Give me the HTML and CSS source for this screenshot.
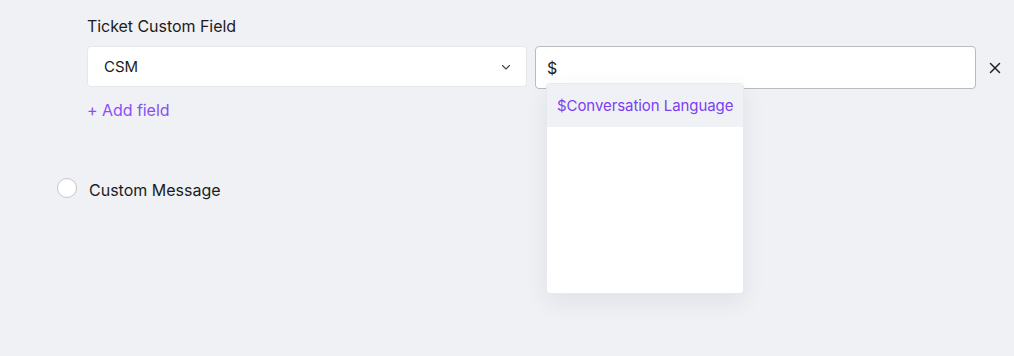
FILE: index.html
```html
<!DOCTYPE html>
<html>
<head>
<meta charset="utf-8">
<link rel="stylesheet" href="styles.css">
</head>
<body>
<div class="page">
  <div class="section">
    <div class="label">Ticket Custom Field</div>
    <div class="row">
      <div class="select">
        <span class="select-value">CSM</span>
        <svg class="chevron" width="12" height="8" viewBox="0 0 12 8"><path d="M2.5 2.5 L6 6 L9.5 2.5" fill="none" stroke="#444" stroke-width="1.1" stroke-linecap="round" stroke-linejoin="round"/></svg>
      </div>
      <div class="input-wrap">
        <div class="input">$</div>
        <div class="dropdown">
          <div class="option active">$Conversation Language</div>
        </div>
      </div>
      <button class="remove">
        <svg width="14" height="14" viewBox="0 0 14 14"><path d="M2.5 2.5 L11.5 11.5 M11.5 2.5 L2.5 11.5" stroke="#222" stroke-width="1.5" stroke-linecap="round"/></svg>
      </button>
    </div>
    <div class="add">+ Add field</div>
  </div>
  <div class="radio-row">
    <span class="radio"></span>
    <span class="radio-label">Custom Message</span>
  </div>
</div>
</body>
</html>
```
FILE: styles.css
```css
* { box-sizing: border-box; }
html, body { margin: 0; padding: 0; }
body {
  background: #f0f1f5;
  font-family: Inter, "Noto Sans", sans-serif;
  color: #1f1f24;
  width: 1014px;
  height: 356px;
  overflow: hidden;
}
.page {
  padding: 14px 0 0 0;
}
.section {
  padding-left: 87px;
}
.label {
  font-size: 16px;
  line-height: 24px;
  letter-spacing: -0.05px;
  color: #1c1c21;
  margin-bottom: 8px;
}
.row {
  display: flex;
  align-items: flex-start;
}
.select {
  width: 440px;
  height: 41px;
  background: #fff;
  border: 1px solid #e6e7ec;
  border-radius: 4px;
  display: flex;
  align-items: center;
  justify-content: space-between;
  padding: 0 14px 0 16px;
  font-size: 15px;
  letter-spacing: 0;
  color: #1c1c21;
}
.chevron { margin-top: 1px; }
.input-wrap {
  position: relative;
  margin-left: 8px;
}
.input {
  width: 441px;
  height: 43px;
  background: #fff;
  border: 1px solid #b9bac2;
  border-radius: 4px;
  padding: 0 11px;
  display: flex;
  align-items: center;
  font-size: 16px;
  color: #1c1c21;
}
.dropdown {
  position: absolute;
  left: 11px;
  top: 37px;
  width: 198px;
  height: 211px;
  background: #fff;
  border: 1px solid #e8e9ee;
  border-radius: 4px;
  box-shadow: 0 8px 24px rgba(30, 30, 50, 0.07);
  overflow: hidden;
}
.option {
  height: 43px;
  display: flex;
  align-items: center;
  padding-left: 10px;
  font-size: 15px;
  letter-spacing: -0.07px;
  color: #7b3ff2;
}
.option.active { background: #f0f1f5; }
.remove {
  border: none;
  background: transparent;
  padding: 0;
  margin-left: 12px;
  height: 43px;
  width: 14px;
  display: flex;
  align-items: center;
  justify-content: center;
}
.add {
  margin-top: 9px;
  font-size: 16px;
  line-height: 24px;
  letter-spacing: -0.05px;
  color: #8a4ff5;
}
.radio-row {
  display: flex;
  align-items: center;
  padding-left: 57px;
  margin-top: 54px;
}
.radio {
  width: 20px;
  height: 20px;
  border-radius: 50%;
  background: #fff;
  border: 1px solid #c5c6cc;
}
.radio-label {
  margin-left: 12px;
  font-size: 16px;
  letter-spacing: 0;
  color: #1c1c21;
  margin-top: 4px;
}
```
